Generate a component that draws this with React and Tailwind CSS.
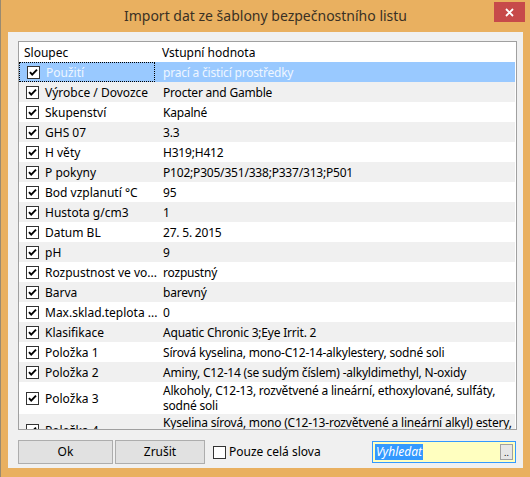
import { useState } from "react";

const rows = [
  { name: "Použití", value: "prací a čisticí prostředky" },
  { name: "Výrobce / Dovozce", value: "Procter and Gamble" },
  { name: "Skupenství", value: "Kapalné" },
  { name: "GHS 07", value: "3.3" },
  { name: "H věty", value: "H319;H412" },
  { name: "P pokyny", value: "P102;P305/351/338;P337/313;P501" },
  { name: "Bod vzplanutí °C", value: "95" },
  { name: "Hustota g/cm3", value: "1" },
  { name: "Datum BL", value: "27. 5. 2015" },
  { name: "pH", value: "9" },
  { name: "Rozpustnost ve vo...", value: "rozpustný" },
  { name: "Barva", value: "barevný" },
  { name: "Max.sklad.teplota ...", value: "0" },
  { name: "Klasifikace", value: "Aquatic Chronic 3;Eye Irrit. 2" },
  { name: "Položka 1", value: "Sírová kyselina, mono-C12-14-alkylestery, sodné soli" },
  { name: "Položka 2", value: "Aminy, C12-14 (se sudým číslem) -alkyldimethyl, N-oxidy" },
  { name: "Položka 3", value: "Alkoholy, C12-13, rozvětvené a lineární, ethoxylované, sulfáty,\nsodné soli", tall: true },
  { name: "Položka 4", value: "Kyselina sírová, mono (C12-13-rozvětvené a lineární alkyl) estery,\nsodné soli", tall: true },
];

function Check({ checked = true }) {
  return (
    <svg width="13" height="13" viewBox="0 0 13 13" className="shrink-0">
      <rect x="0.5" y="0.5" width="12" height="12" fill="#ffffff" stroke="#333333" />
      {checked && (
        <path d="M3 6.2 L5.2 8.6 L10 3.6" fill="none" stroke="#000000" strokeWidth="1.9" />
      )}
    </svg>
  );
}

export default function App() {
  const [selected, setSelected] = useState(0);
  const font = "font-['Segoe_UI','Noto_Sans',sans-serif]";

  return (
    <div className={`w-[530px] h-[477px] bg-[#e9b060] border-l border-[#9a8a70] flex flex-col overflow-hidden ${font}`}>
      {/* Title bar */}
      <div className="relative h-[32px] shrink-0 flex items-center justify-center">
        <span className="text-[14px] text-[#3a3024] pb-[1px]">Import dat ze šablony bezpečnostního listu</span>
        <div className="absolute right-[5px] top-[2px] w-[31px] h-[20px] bg-[#c74a4a] flex items-center justify-center">
          <svg width="9" height="9" viewBox="0 0 9 9">
            <path d="M1 1 L8 8 M8 1 L1 8" stroke="#ffffff" strokeWidth="1.8" />
          </svg>
        </div>
      </div>

      {/* Client area */}
      <div className="ml-[7px] w-[515px] h-[436px] bg-[#f0f0f0] pl-[10px] pr-[6px] pt-[9px] flex flex-col">
        <div className="h-[389px] bg-white border border-[#a0a0a0] overflow-hidden text-[12px] text-black leading-[15px]">
          <div className="flex h-[20px] items-center bg-white">
            <div className="w-[136px] pl-[5px]">Sloupec</div>
            <div className="pl-[7px]">Vstupní hodnota</div>
          </div>
          {rows.map((r, i) => {
            const sel = i === selected;
            const bg = sel ? "bg-[#99c9ff]" : i % 2 === 1 ? "bg-[#f0f0f0]" : "bg-white";
            return (
              <div
                key={r.name}
                onClick={() => setSelected(i)}
                className={`flex mr-[1px] ${r.tall ? "h-[32px]" : "h-[20px]"} ${bg} ${sel ? "text-[#eef6ff]" : ""}`}
              >
                <div
                  className={`w-[136px] shrink-0 flex items-center pl-[7px] gap-[6px] ${
                    sel ? "border border-dotted border-black" : ""
                  }`}
                >
                  <Check />
                  <span className="whitespace-nowrap">{r.name}</span>
                </div>
                <div className="flex-1 min-w-0 flex items-center pl-[8px] overflow-hidden">
                  <span className="whitespace-pre tracking-[-0.2px]">{r.value}</span>
                </div>
              </div>
            );
          })}
        </div>

        {/* Bottom bar */}
        <div className="flex items-center mt-[10px] h-[24px] text-[12px] text-black">
          <button className="w-[95px] h-[24px] bg-[#e1e1e1] border border-[#adadad]">Ok</button>
          <button className="ml-[2px] w-[90px] h-[24px] bg-[#e1e1e1] border border-[#adadad]">Zrušit</button>
          <div className="ml-[8px] flex items-center gap-[3px]">
            <span className="w-[13px] h-[13px] bg-white border border-[#333333]" />
            <span>Pouze celá slova</span>
          </div>
          <div className="ml-auto mr-[1px] w-[144px] h-[22px] bg-[#ffffc0] border border-[#3399ff] flex items-center px-[2px]">
            <span className="bg-[#3399ff] text-white italic leading-[16px] px-[1px]">Vyhledat</span>
            <div className="ml-auto w-[13px] h-[16px] bg-[#e6e6e6] border border-[#a0a0a0] flex items-end justify-center text-[9px] leading-[12px]">..</div>
          </div>
        </div>
      </div>
    </div>
  );
}
